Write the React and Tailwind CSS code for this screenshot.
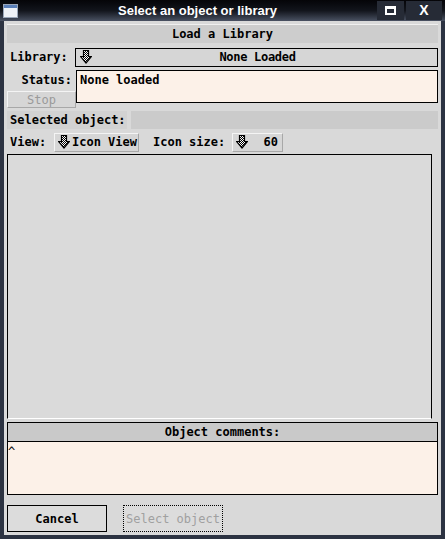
import React from 'react';

const mono = { fontFamily: '"DejaVu Sans Mono", "Liberation Mono", monospace' };

const DownArrow = ({ id }) => (
  <svg width="12" height="14" viewBox="0 0 12 14" className="shrink-0">
    <defs>
      <pattern id={id} width="2" height="2" patternUnits="userSpaceOnUse">
        <rect width="2" height="2" fill="#ffffff" />
        <rect width="1" height="1" fill="#000000" />
        <rect x="1" y="1" width="1" height="1" fill="#000000" />
      </pattern>
    </defs>
    <path
      d="M3.5 0.5 H8.5 V6.5 H11.5 L6 13 L0.5 6.5 H3.5 Z"
      fill={`url(#${id})`}
      stroke="#000"
      strokeWidth="1.2"
      strokeLinejoin="miter"
    />
  </svg>
);

const App = () => {
  return (
    <div className="w-[445px] h-[539px] bg-[#2c3342] flex flex-col overflow-hidden" style={mono}>
      {/* title bar */}
      <div className="h-[21px] shrink-0 flex items-center bg-gradient-to-b from-[#050508] via-[#12151c] to-[#4a5263] relative">
        <div className="ml-[3px] w-[15px] h-[14px] border border-[#9aa6b8] bg-[#eef1f6] flex flex-col">
          <div className="h-[3px] bg-[#5a7fb8]" />
        </div>
        <div
          className="flex-1 text-center text-white font-bold text-[13px]"
          style={{ fontFamily: '"Liberation Sans", Arial, sans-serif' }}
        >
          Select an object or library
        </div>
        <div className="flex h-[19px] mr-[3px] gap-[2px]">
          <div className="w-[27px] bg-[#262b36] flex items-center justify-center">
            <div className="w-[11px] h-[9px] border-2 border-t-[3px] border-white" />
          </div>
          <div className="w-[36px] bg-[#262b36] flex items-center justify-center text-white font-bold text-[14px]" style={{ fontFamily: '"Liberation Sans", Arial, sans-serif' }}>
            X
          </div>
        </div>
      </div>

      {/* content */}
      <div className="flex-1 mx-[4px] mb-[4px] bg-[#d9d9d9] px-[3px] pt-[3px] flex flex-col text-[12px] font-bold text-black">
        <div className="h-[19px] bg-[#cdcdcd] flex items-center justify-center border-t border-[#f0f0f0]">
          Load a Library
        </div>

        {/* library row */}
        <div className="mt-[4px] flex items-center h-[20px]">
          <div className="w-[68px] pl-[3px]">Library:</div>
          <div className="flex-1 h-[19px] border border-black bg-[#d6d6d6] flex items-center pl-[4px]">
            <DownArrow id="p1" />
            <div className="flex-1 text-center pr-[14px] tracking-[-0.3px]">None Loaded</div>
          </div>
        </div>

        {/* status */}
        <div className="mt-[3px] flex">
          <div className="w-[69px] flex flex-col">
            <div className="h-[17px] mt-[1px] flex items-center justify-end pr-[4px]">Status:</div>
            <div className="mt-[3px] h-[17px] border border-[#f4f4f4] border-r-[#a8a8a8] border-b-[#a8a8a8] bg-[#d6d6d6] flex items-center justify-center text-[#9a9a9a] font-normal">
              Stop
            </div>
          </div>
          <div className="flex-1 h-[33px] border border-black bg-[#fcf1e8] px-[3px] pt-[1px] leading-[16px]">
            None loaded
          </div>
        </div>

        {/* selected object */}
        <div className="mt-[3px] flex h-[18px]">
          <div className="w-[120px] bg-[#d2d2d2] flex items-center pl-[3px]">Selected object:</div>
          <div className="flex-1 ml-[4px] bg-[#cbcbcb]" />
        </div>

        {/* view row */}
        <div className="mt-[3px] flex items-center h-[20px]">
          <div className="w-[47px] pl-[3px]">View:</div>
          <div className="h-[19px] w-[85px] bg-[#d6d6d6] border border-[#f4f4f4] border-r-[#a8a8a8] border-b-[#a8a8a8] flex items-center pl-[3px] gap-[2px]">
            <DownArrow id="p2" />
            <span>Icon View</span>
          </div>
          <div className="ml-[14px] w-[79px]">Icon size:</div>
          <div className="h-[19px] w-[51px] bg-[#d6d6d6] border border-[#f4f4f4] border-r-[#a8a8a8] border-b-[#a8a8a8] flex items-center pl-[3px]">
            <DownArrow id="p3" />
            <span className="flex-1 text-right pr-[4px]">60</span>
          </div>
        </div>

        {/* canvas */}
        <div className="mt-[2px] h-[265px] w-[425px] border border-black border-b-white bg-[#dadada]" />

        {/* comments */}
        <div className="mt-[3px] h-[20px] border border-black bg-[#c9c9c9] flex items-center justify-center">
          Object comments:
        </div>
        <div className="h-[53px] border border-t-0 border-black bg-[#fcf1e8] pt-[3px] font-normal leading-[14px]">
          ^
        </div>

        {/* buttons */}
        <div className="mt-[10px] flex items-center gap-[16px]">
          <div className="w-[100px] h-[27px] border border-black bg-[#dcdcdc] flex items-center justify-center">
            Cancel
          </div>
          <div className="w-[100px] h-[27px] border border-dotted border-black bg-[#dcdcdc] flex items-center justify-center text-[#a0a0a0] font-normal">
            Select object
          </div>
        </div>
      </div>
    </div>
  );
};

export default App;
